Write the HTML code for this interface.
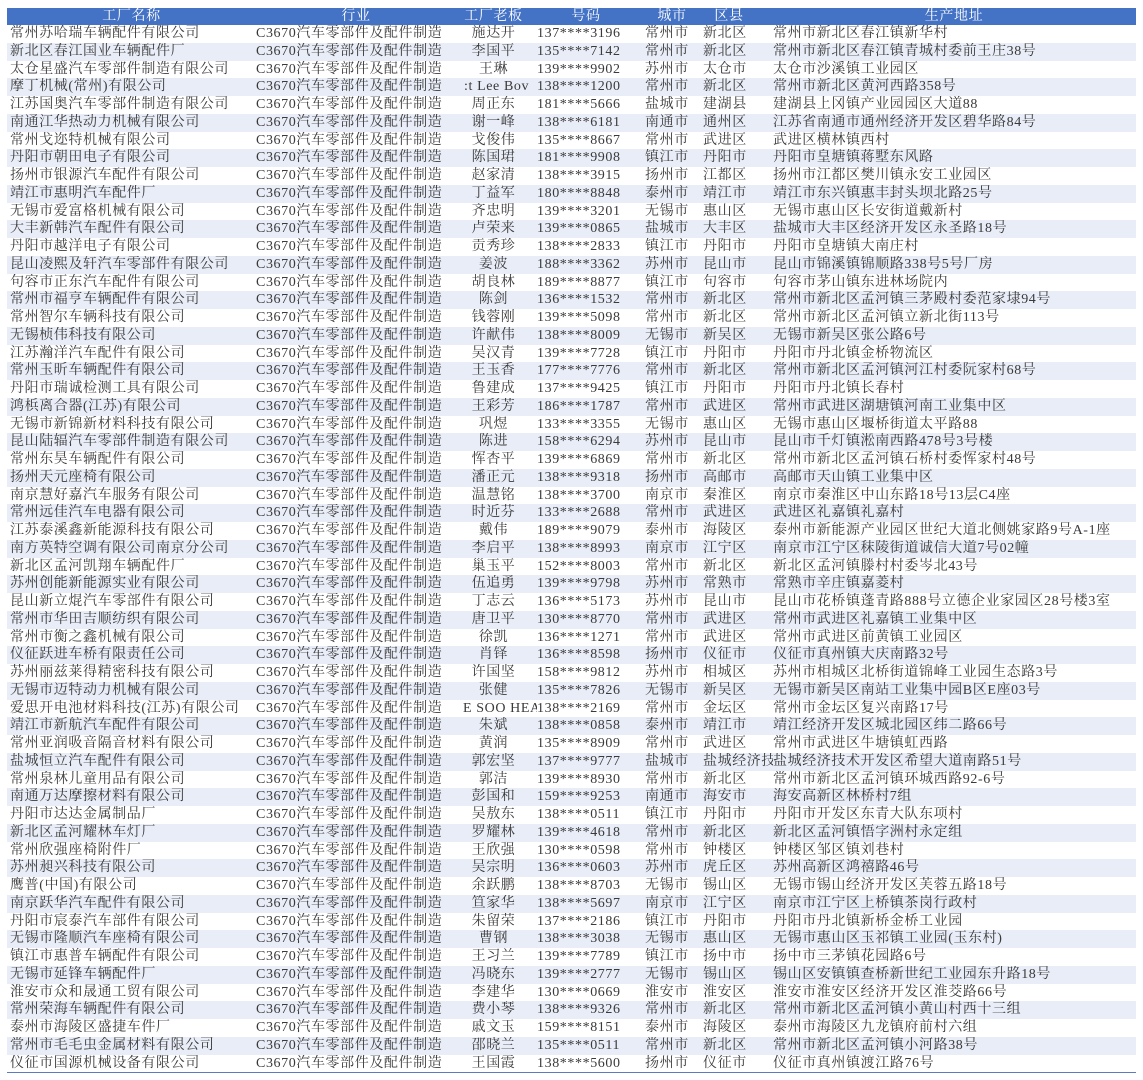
<!DOCTYPE html>
<html><head><meta charset="utf-8">
<style>
html,body{margin:0;padding:0;background:#fff;width:1143px;height:1080px;overflow:hidden}
.t{position:absolute;left:7px;top:8px;width:1129px}
.r{position:relative;height:17.76px;font-family:"Liberation Serif","Noto Serif CJK SC",serif;font-size:14px;line-height:17.76px;color:#3a3a3a;letter-spacing:0.6px;white-space:nowrap}
.r:nth-child(odd){background:#e9edf7}
.r.h{background:#4472c4;color:#fff;height:17px;line-height:17px}
.r span{position:absolute;top:0;overflow:hidden}
.a{left:3px;width:243px}
.b{left:249px;width:196px}
.c{left:445px;width:83px;text-align:center}
.d{left:530px;width:110px}
.e{left:638px;width:58px}
.f{left:696px;width:70px}
.g{left:766px;width:362px}
.h .a{text-align:center}
.h .b{text-align:center;left:249px;width:200px}
.h .d{text-align:center;left:530px;width:98px}
.h .e{left:636px;width:58px;text-align:center}
.h .f{left:694px;width:56px;text-align:center}
.h .g{text-align:center}
.line{position:absolute;left:7px;top:1072px;width:1129px;height:1px;background:#5a7bbf}
</style></head><body>
<div class="t">
<div class="r h"><span class="a">工厂名称</span><span class="b">行业</span><span class="c">工厂老板</span><span class="d">号码</span><span class="e">城市</span><span class="f">区县</span><span class="g">生产地址</span></div>
<div class="r"><span class="a">常州苏哈瑞车辆配件有限公司</span><span class="b">C3670汽车零部件及配件制造</span><span class="c">施达开</span><span class="d">137****3196</span><span class="e">常州市</span><span class="f">新北区</span><span class="g">常州市新北区春江镇新华村</span></div>
<div class="r"><span class="a">新北区春江国业车辆配件厂</span><span class="b">C3670汽车零部件及配件制造</span><span class="c">李国平</span><span class="d">135****7142</span><span class="e">常州市</span><span class="f">新北区</span><span class="g">常州市新北区春江镇青城村委前王庄38号</span></div>
<div class="r"><span class="a">太仓星盛汽车零部件制造有限公司</span><span class="b">C3670汽车零部件及配件制造</span><span class="c">王琳</span><span class="d">139****9902</span><span class="e">苏州市</span><span class="f">太仓市</span><span class="g">太仓市沙溪镇工业园区</span></div>
<div class="r"><span class="a">摩丁机械(常州)有限公司</span><span class="b">C3670汽车零部件及配件制造</span><span class="c" style="text-align:left;left:457px;width:73px">:t Lee Bov</span><span class="d">138****1200</span><span class="e">常州市</span><span class="f">新北区</span><span class="g">常州市新北区黄河西路358号</span></div>
<div class="r"><span class="a">江苏国奥汽车零部件制造有限公司</span><span class="b">C3670汽车零部件及配件制造</span><span class="c">周正东</span><span class="d">181****5666</span><span class="e">盐城市</span><span class="f">建湖县</span><span class="g">建湖县上冈镇产业园园区大道88</span></div>
<div class="r"><span class="a">南通江华热动力机械有限公司</span><span class="b">C3670汽车零部件及配件制造</span><span class="c">谢一峰</span><span class="d">138****6181</span><span class="e">南通市</span><span class="f">通州区</span><span class="g">江苏省南通市通州经济开发区碧华路84号</span></div>
<div class="r"><span class="a">常州戈迩特机械有限公司</span><span class="b">C3670汽车零部件及配件制造</span><span class="c">戈俊伟</span><span class="d">135****8667</span><span class="e">常州市</span><span class="f">武进区</span><span class="g">武进区横林镇西村</span></div>
<div class="r"><span class="a">丹阳市朝田电子有限公司</span><span class="b">C3670汽车零部件及配件制造</span><span class="c">陈国珺</span><span class="d">181****9908</span><span class="e">镇江市</span><span class="f">丹阳市</span><span class="g">丹阳市皇塘镇蒋墅东风路</span></div>
<div class="r"><span class="a">扬州市银源汽车配件有限公司</span><span class="b">C3670汽车零部件及配件制造</span><span class="c">赵家清</span><span class="d">138****3915</span><span class="e">扬州市</span><span class="f">江都区</span><span class="g">扬州市江都区樊川镇永安工业园区</span></div>
<div class="r"><span class="a">靖江市惠明汽车配件厂</span><span class="b">C3670汽车零部件及配件制造</span><span class="c">丁益军</span><span class="d">180****8848</span><span class="e">泰州市</span><span class="f">靖江市</span><span class="g">靖江市东兴镇惠丰封头坝北路25号</span></div>
<div class="r"><span class="a">无锡市爱富格机械有限公司</span><span class="b">C3670汽车零部件及配件制造</span><span class="c">齐忠明</span><span class="d">139****3201</span><span class="e">无锡市</span><span class="f">惠山区</span><span class="g">无锡市惠山区长安街道戴新村</span></div>
<div class="r"><span class="a">大丰新韩汽车配件有限公司</span><span class="b">C3670汽车零部件及配件制造</span><span class="c">卢荣来</span><span class="d">139****0865</span><span class="e">盐城市</span><span class="f">大丰区</span><span class="g">盐城市大丰区经济开发区永圣路18号</span></div>
<div class="r"><span class="a">丹阳市越洋电子有限公司</span><span class="b">C3670汽车零部件及配件制造</span><span class="c">贡秀珍</span><span class="d">138****2833</span><span class="e">镇江市</span><span class="f">丹阳市</span><span class="g">丹阳市皇塘镇大南庄村</span></div>
<div class="r"><span class="a">昆山凌熙及轩汽车零部件有限公司</span><span class="b">C3670汽车零部件及配件制造</span><span class="c">姜波</span><span class="d">188****3362</span><span class="e">苏州市</span><span class="f">昆山市</span><span class="g">昆山市锦溪镇锦顺路338号5号厂房</span></div>
<div class="r"><span class="a">句容市正东汽车配件有限公司</span><span class="b">C3670汽车零部件及配件制造</span><span class="c">胡良林</span><span class="d">189****8877</span><span class="e">镇江市</span><span class="f">句容市</span><span class="g">句容市茅山镇东进林场院内</span></div>
<div class="r"><span class="a">常州市福亨车辆配件有限公司</span><span class="b">C3670汽车零部件及配件制造</span><span class="c">陈剑</span><span class="d">136****1532</span><span class="e">常州市</span><span class="f">新北区</span><span class="g">常州市新北区孟河镇三茅殿村委范家埭94号</span></div>
<div class="r"><span class="a">常州智尔车辆科技有限公司</span><span class="b">C3670汽车零部件及配件制造</span><span class="c">钱蓉刚</span><span class="d">139****5098</span><span class="e">常州市</span><span class="f">新北区</span><span class="g">常州市新北区孟河镇立新北街113号</span></div>
<div class="r"><span class="a">无锡桢伟科技有限公司</span><span class="b">C3670汽车零部件及配件制造</span><span class="c">许献伟</span><span class="d">138****8009</span><span class="e">无锡市</span><span class="f">新吴区</span><span class="g">无锡市新吴区张公路6号</span></div>
<div class="r"><span class="a">江苏瀚洋汽车配件有限公司</span><span class="b">C3670汽车零部件及配件制造</span><span class="c">吴汉青</span><span class="d">139****7728</span><span class="e">镇江市</span><span class="f">丹阳市</span><span class="g">丹阳市丹北镇金桥物流区</span></div>
<div class="r"><span class="a">常州玉昕车辆配件有限公司</span><span class="b">C3670汽车零部件及配件制造</span><span class="c">王玉香</span><span class="d">177****7776</span><span class="e">常州市</span><span class="f">新北区</span><span class="g">常州市新北区孟河镇河江村委阮家村68号</span></div>
<div class="r"><span class="a">丹阳市瑞诚检测工具有限公司</span><span class="b">C3670汽车零部件及配件制造</span><span class="c">鲁建成</span><span class="d">137****9425</span><span class="e">镇江市</span><span class="f">丹阳市</span><span class="g">丹阳市丹北镇长春村</span></div>
<div class="r"><span class="a">鸿梹离合器(江苏)有限公司</span><span class="b">C3670汽车零部件及配件制造</span><span class="c">王彩芳</span><span class="d">186****1787</span><span class="e">常州市</span><span class="f">武进区</span><span class="g">常州市武进区湖塘镇河南工业集中区</span></div>
<div class="r"><span class="a">无锡市新锦新材料科技有限公司</span><span class="b">C3670汽车零部件及配件制造</span><span class="c">巩煜</span><span class="d">133****3355</span><span class="e">无锡市</span><span class="f">惠山区</span><span class="g">无锡市惠山区堰桥街道太平路88</span></div>
<div class="r"><span class="a">昆山陆辐汽车零部件制造有限公司</span><span class="b">C3670汽车零部件及配件制造</span><span class="c">陈进</span><span class="d">158****6294</span><span class="e">苏州市</span><span class="f">昆山市</span><span class="g">昆山市千灯镇淞南西路478号3号楼</span></div>
<div class="r"><span class="a">常州东昊车辆配件有限公司</span><span class="b">C3670汽车零部件及配件制造</span><span class="c">恽杏平</span><span class="d">139****6869</span><span class="e">常州市</span><span class="f">新北区</span><span class="g">常州市新北区孟河镇石桥村委恽家村48号</span></div>
<div class="r"><span class="a">扬州天元座椅有限公司</span><span class="b">C3670汽车零部件及配件制造</span><span class="c">潘正元</span><span class="d">138****9318</span><span class="e">扬州市</span><span class="f">高邮市</span><span class="g">高邮市天山镇工业集中区</span></div>
<div class="r"><span class="a">南京慧好嘉汽车服务有限公司</span><span class="b">C3670汽车零部件及配件制造</span><span class="c">温慧铭</span><span class="d">138****3700</span><span class="e">南京市</span><span class="f">秦淮区</span><span class="g">南京市秦淮区中山东路18号13层C4座</span></div>
<div class="r"><span class="a">常州远佳汽车电器有限公司</span><span class="b">C3670汽车零部件及配件制造</span><span class="c">时近芬</span><span class="d">133****2688</span><span class="e">常州市</span><span class="f">武进区</span><span class="g">武进区礼嘉镇礼嘉村</span></div>
<div class="r"><span class="a">江苏泰溪鑫新能源科技有限公司</span><span class="b">C3670汽车零部件及配件制造</span><span class="c">戴伟</span><span class="d">189****9079</span><span class="e">泰州市</span><span class="f">海陵区</span><span class="g">泰州市新能源产业园区世纪大道北侧姚家路9号A-1座</span></div>
<div class="r"><span class="a">南方英特空调有限公司南京分公司</span><span class="b">C3670汽车零部件及配件制造</span><span class="c">李启平</span><span class="d">138****8993</span><span class="e">南京市</span><span class="f">江宁区</span><span class="g">南京市江宁区秣陵街道诚信大道7号02幢</span></div>
<div class="r"><span class="a">新北区孟河凯翔车辆配件厂</span><span class="b">C3670汽车零部件及配件制造</span><span class="c">巢玉平</span><span class="d">152****8003</span><span class="e">常州市</span><span class="f">新北区</span><span class="g">新北区孟河镇滕村村委岑北43号</span></div>
<div class="r"><span class="a">苏州创能新能源实业有限公司</span><span class="b">C3670汽车零部件及配件制造</span><span class="c">伍追勇</span><span class="d">139****9798</span><span class="e">苏州市</span><span class="f">常熟市</span><span class="g">常熟市辛庄镇嘉菱村</span></div>
<div class="r"><span class="a">昆山新立焜汽车零部件有限公司</span><span class="b">C3670汽车零部件及配件制造</span><span class="c">丁志云</span><span class="d">136****5173</span><span class="e">苏州市</span><span class="f">昆山市</span><span class="g">昆山市花桥镇蓬青路888号立德企业家园区28号楼3室</span></div>
<div class="r"><span class="a">常州市华田吉顺纺织有限公司</span><span class="b">C3670汽车零部件及配件制造</span><span class="c">唐卫平</span><span class="d">130****8770</span><span class="e">常州市</span><span class="f">武进区</span><span class="g">常州市武进区礼嘉镇工业集中区</span></div>
<div class="r"><span class="a">常州市衡之鑫机械有限公司</span><span class="b">C3670汽车零部件及配件制造</span><span class="c">徐凯</span><span class="d">136****1271</span><span class="e">常州市</span><span class="f">武进区</span><span class="g">常州市武进区前黄镇工业园区</span></div>
<div class="r"><span class="a">仪征跃进车桥有限责任公司</span><span class="b">C3670汽车零部件及配件制造</span><span class="c">肖铎</span><span class="d">136****8598</span><span class="e">扬州市</span><span class="f">仪征市</span><span class="g">仪征市真州镇大庆南路32号</span></div>
<div class="r"><span class="a">苏州丽兹莱得精密科技有限公司</span><span class="b">C3670汽车零部件及配件制造</span><span class="c">许国坚</span><span class="d">158****9812</span><span class="e">苏州市</span><span class="f">相城区</span><span class="g">苏州市相城区北桥街道锦峰工业园生态路3号</span></div>
<div class="r"><span class="a">无锡市迈特动力机械有限公司</span><span class="b">C3670汽车零部件及配件制造</span><span class="c">张健</span><span class="d">135****7826</span><span class="e">无锡市</span><span class="f">新吴区</span><span class="g">无锡市新吴区南站工业集中园B区E座03号</span></div>
<div class="r"><span class="a">爱思开电池材料科技(江苏)有限公司</span><span class="b">C3670汽车零部件及配件制造</span><span class="c" style="text-align:left;left:456px;width:74px">E SOO HEA</span><span class="d">138****2169</span><span class="e">常州市</span><span class="f">金坛区</span><span class="g">常州市金坛区复兴南路17号</span></div>
<div class="r"><span class="a">靖江市新航汽车配件有限公司</span><span class="b">C3670汽车零部件及配件制造</span><span class="c">朱斌</span><span class="d">138****0858</span><span class="e">泰州市</span><span class="f">靖江市</span><span class="g">靖江经济开发区城北园区纬二路66号</span></div>
<div class="r"><span class="a">常州亚润吸音隔音材料有限公司</span><span class="b">C3670汽车零部件及配件制造</span><span class="c">黄润</span><span class="d">135****8909</span><span class="e">常州市</span><span class="f">武进区</span><span class="g">常州市武进区牛塘镇虹西路</span></div>
<div class="r"><span class="a">盐城恒立汽车配件有限公司</span><span class="b">C3670汽车零部件及配件制造</span><span class="c">郭宏坚</span><span class="d">137****9777</span><span class="e">盐城市</span><span class="f">盐城经济技术开发区</span><span class="g">盐城经济技术开发区希望大道南路51号</span></div>
<div class="r"><span class="a">常州泉林儿童用品有限公司</span><span class="b">C3670汽车零部件及配件制造</span><span class="c">郭洁</span><span class="d">139****8930</span><span class="e">常州市</span><span class="f">新北区</span><span class="g">常州市新北区孟河镇环城西路92-6号</span></div>
<div class="r"><span class="a">南通万达摩擦材料有限公司</span><span class="b">C3670汽车零部件及配件制造</span><span class="c">彭国和</span><span class="d">159****9253</span><span class="e">南通市</span><span class="f">海安市</span><span class="g">海安高新区林桥村7组</span></div>
<div class="r"><span class="a">丹阳市达达金属制品厂</span><span class="b">C3670汽车零部件及配件制造</span><span class="c">吴敖东</span><span class="d">138****0511</span><span class="e">镇江市</span><span class="f">丹阳市</span><span class="g">丹阳市开发区东青大队东项村</span></div>
<div class="r"><span class="a">新北区孟河耀林车灯厂</span><span class="b">C3670汽车零部件及配件制造</span><span class="c">罗耀林</span><span class="d">139****4618</span><span class="e">常州市</span><span class="f">新北区</span><span class="g">新北区孟河镇悟字洲村永定组</span></div>
<div class="r"><span class="a">常州欣强座椅附件厂</span><span class="b">C3670汽车零部件及配件制造</span><span class="c">王欣强</span><span class="d">130****0598</span><span class="e">常州市</span><span class="f">钟楼区</span><span class="g">钟楼区邹区镇刘巷村</span></div>
<div class="r"><span class="a">苏州昶兴科技有限公司</span><span class="b">C3670汽车零部件及配件制造</span><span class="c">吴宗明</span><span class="d">136****0603</span><span class="e">苏州市</span><span class="f">虎丘区</span><span class="g">苏州高新区鸿禧路46号</span></div>
<div class="r"><span class="a">鹰普(中国)有限公司</span><span class="b">C3670汽车零部件及配件制造</span><span class="c">余跃鹏</span><span class="d">138****8703</span><span class="e">无锡市</span><span class="f">锡山区</span><span class="g">无锡市锡山经济开发区芙蓉五路18号</span></div>
<div class="r"><span class="a">南京跃华汽车配件有限公司</span><span class="b">C3670汽车零部件及配件制造</span><span class="c">笪家华</span><span class="d">138****5697</span><span class="e">南京市</span><span class="f">江宁区</span><span class="g">南京市江宁区上桥镇茶岗行政村</span></div>
<div class="r"><span class="a">丹阳市宸泰汽车部件有限公司</span><span class="b">C3670汽车零部件及配件制造</span><span class="c">朱留荣</span><span class="d">137****2186</span><span class="e">镇江市</span><span class="f">丹阳市</span><span class="g">丹阳市丹北镇新桥金桥工业园</span></div>
<div class="r"><span class="a">无锡市隆顺汽车座椅有限公司</span><span class="b">C3670汽车零部件及配件制造</span><span class="c">曹钢</span><span class="d">138****3038</span><span class="e">无锡市</span><span class="f">惠山区</span><span class="g">无锡市惠山区玉祁镇工业园(玉东村)</span></div>
<div class="r"><span class="a">镇江市惠普车辆配件有限公司</span><span class="b">C3670汽车零部件及配件制造</span><span class="c">王习兰</span><span class="d">139****7789</span><span class="e">镇江市</span><span class="f">扬中市</span><span class="g">扬中市三茅镇花园路6号</span></div>
<div class="r"><span class="a">无锡市延锋车辆配件厂</span><span class="b">C3670汽车零部件及配件制造</span><span class="c">冯晓东</span><span class="d">139****2777</span><span class="e">无锡市</span><span class="f">锡山区</span><span class="g">锡山区安镇镇查桥新世纪工业园东升路18号</span></div>
<div class="r"><span class="a">淮安市众和晟通工贸有限公司</span><span class="b">C3670汽车零部件及配件制造</span><span class="c">李建华</span><span class="d">130****0669</span><span class="e">淮安市</span><span class="f">淮安区</span><span class="g">淮安市淮安区经济开发区淮茭路66号</span></div>
<div class="r"><span class="a">常州荣海车辆配件有限公司</span><span class="b">C3670汽车零部件及配件制造</span><span class="c">费小琴</span><span class="d">138****9326</span><span class="e">常州市</span><span class="f">新北区</span><span class="g">常州市新北区孟河镇小黄山村西十三组</span></div>
<div class="r"><span class="a">泰州市海陵区盛捷车件厂</span><span class="b">C3670汽车零部件及配件制造</span><span class="c">戚文玉</span><span class="d">159****8151</span><span class="e">泰州市</span><span class="f">海陵区</span><span class="g">泰州市海陵区九龙镇府前村六组</span></div>
<div class="r"><span class="a">常州市毛毛虫金属材料有限公司</span><span class="b">C3670汽车零部件及配件制造</span><span class="c">邵晓兰</span><span class="d">135****0511</span><span class="e">常州市</span><span class="f">新北区</span><span class="g">常州市新北区孟河镇小河路38号</span></div>
<div class="r"><span class="a">仪征市国源机械设备有限公司</span><span class="b">C3670汽车零部件及配件制造</span><span class="c">王国霞</span><span class="d">138****5600</span><span class="e">扬州市</span><span class="f">仪征市</span><span class="g">仪征市真州镇渡江路76号</span></div>
</div>
<div class="line"></div>
</body></html>
